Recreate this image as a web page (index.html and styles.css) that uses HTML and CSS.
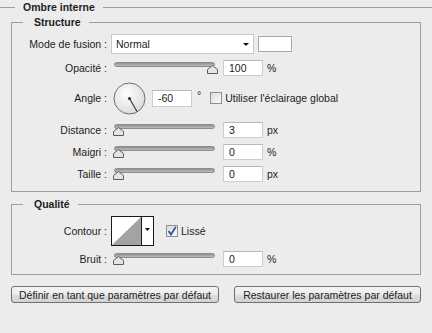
FILE: index.html
```html
<!DOCTYPE html>
<html>
<head>
    <title>Ombre interne</title>
    <link rel="stylesheet" href="styles.css">
</head>
<body>
    <fieldset class="effect">
        <legend>Ombre interne</legend>

        <!-- Structure -->
        <fieldset class="group structure">
            <legend>Structure</legend>

            <div class="row row-mode">
                <span class="label">Mode de fusion :</span>
                <div class="select">
                    <span>Normal</span>
                    <span class="arrow"></span>
                </div>
                <div class="swatch"></div>
            </div>

            <div class="row">
                <span class="label">Opacité :</span>
                <div class="slider">
                    <div class="track"></div>
                    <svg class="thumb" style="left: 96px" width="11" height="9" viewBox="0 0 11 9"><path d="M0.5 8.5V4.5L5.5 0.5L10.5 4.5V8.5Z"/></svg>
                </div>
                <input class="field" type="text" value="100">
                <span class="unit">%</span>
            </div>

            <div class="row row-angle">
                <span class="label">Angle :</span>
                <svg class="dial" width="33" height="33" viewBox="0 0 33 33">
                    <defs>
                        <radialGradient id="dialFill" cx="0.4" cy="0.35" r="0.7">
                            <stop offset="0" stop-color="#ffffff"/>
                            <stop offset="1" stop-color="#d9d9d9"/>
                        </radialGradient>
                    </defs>
                    <circle cx="16.5" cy="16.5" r="15.5" fill="url(#dialFill)" stroke="#6e6e6e"/>
                    <line x1="16.5" y1="16.5" x2="24" y2="29.5" stroke="#3a3a3a" stroke-width="1.2"/>
                    <circle cx="16.5" cy="16.5" r="1.6" fill="#333"/>
                </svg>
                <input class="field field-angle" type="text" value="-60">
                <span class="degree">°</span>
                <span class="checkbox"></span>
                <span class="check-label">Utiliser l'éclairage global</span>
            </div>

            <div class="row">
                <span class="label">Distance :</span>
                <div class="slider">
                    <div class="track"></div>
                    <svg class="thumb" style="left: 2px" width="11" height="9" viewBox="0 0 11 9"><path d="M0.5 8.5V4.5L5.5 0.5L10.5 4.5V8.5Z"/></svg>
                </div>
                <input class="field" type="text" value="3">
                <span class="unit">px</span>
            </div>

            <div class="row">
                <span class="label">Maigri :</span>
                <div class="slider">
                    <div class="track"></div>
                    <svg class="thumb" style="left: 2px" width="11" height="9" viewBox="0 0 11 9"><path d="M0.5 8.5V4.5L5.5 0.5L10.5 4.5V8.5Z"/></svg>
                </div>
                <input class="field" type="text" value="0">
                <span class="unit">%</span>
            </div>

            <div class="row">
                <span class="label">Taille :</span>
                <div class="slider">
                    <div class="track"></div>
                    <svg class="thumb" style="left: 2px" width="11" height="9" viewBox="0 0 11 9"><path d="M0.5 8.5V4.5L5.5 0.5L10.5 4.5V8.5Z"/></svg>
                </div>
                <input class="field" type="text" value="0">
                <span class="unit">px</span>
            </div>
        </fieldset>

        <!-- Qualite -->
        <fieldset class="group quality">
            <legend>Qualité</legend>

            <div class="row row-contour">
                <span class="label">Contour :</span>
                <svg class="contour" width="43" height="30" viewBox="0 0 43 30">
                    <rect x="0.5" y="0.5" width="42" height="29" fill="#fff" stroke="#1a1a1a"/>
                    <path d="M1 29L30 1V29Z" fill="#a3a3a3"/>
                    <line x1="30.5" y1="0.5" x2="30.5" y2="29.5" stroke="#1a1a1a"/>
                    <path d="M34 12H39L36.5 15Z" fill="#111"/>
                </svg>
                <span class="checkbox checked">
                    <svg width="10" height="10" viewBox="0 0 10 10"><path d="M1.5 5L4 8.5L8.8 0.8" fill="none" stroke="#3556a8" stroke-width="1.8"/></svg>
                </span>
                <span class="check-label">Lissé</span>
            </div>

            <div class="row">
                <span class="label">Bruit :</span>
                <div class="slider">
                    <div class="track"></div>
                    <svg class="thumb" style="left: 2px" width="11" height="9" viewBox="0 0 11 9"><path d="M0.5 8.5V4.5L5.5 0.5L10.5 4.5V8.5Z"/></svg>
                </div>
                <input class="field" type="text" value="0">
                <span class="unit">%</span>
            </div>
        </fieldset>

        <div class="buttons">
            <button class="btn btn-default">Définir en tant que paramètres par défaut</button>
            <button class="btn btn-reset">Restaurer les paramètres par défaut</button>
        </div>
    </fieldset>
</body>
</html>
```

FILE: styles.css
```css
body {
    margin: 0;
    background: #ececec;
    font-family: "Liberation Sans", Arial, sans-serif;
    font-size: 10.5px;
    color: #1c1c1c;
}

fieldset {
    margin: 0;
    min-width: 0;
}

legend {
    font-weight: bold;
    line-height: 14px;
}

.effect {
    border: none;
    border-top: 1px solid #9d9d9d;
    padding: 0 11px;
}

.effect > legend {
    margin-left: 4px;
    padding: 0 8px;
}

.group {
    border: 1px solid #9d9d9d;
    padding: 4px 0 9px 0;
}

.group > legend {
    margin-left: 11px;
    padding: 0 8px 0 11px;
}

.structure {
    margin-top: 1px;
}

.quality {
    margin-top: 5px;
    padding-top: 5px;
    padding-bottom: 7px;
}

.row {
    display: flex;
    align-items: center;
    height: 16px;
    margin-bottom: 6px;
}

.row:last-child {
    margin-bottom: 0;
}

.label {
    width: 95px;
    margin-right: 4px;
    text-align: right;
    white-space: nowrap;
}

/* blend mode */
.row-mode {
    height: 21px;
}

.select {
    display: flex;
    align-items: center;
    justify-content: space-between;
    box-sizing: border-box;
    width: 143px;
    height: 20px;
    padding: 0 4px 0 4px;
    background: #fff;
    border: 1px solid #c9c9c9;
}

.arrow {
    border-left: 3px solid transparent;
    border-right: 3px solid transparent;
    border-top: 3px solid #111;
    margin-top: 1px;
}

.swatch {
    box-sizing: border-box;
    width: 34px;
    height: 16px;
    margin-left: 4px;
    background: #fff;
    border: 1px solid #a9a9a9;
}

/* sliders */
.slider {
    position: relative;
    width: 109px;
    height: 16px;
}

.track {
    box-sizing: border-box;
    height: 5px;
    margin: 2px 5px 0 3px;
    border: 1px solid #8c8c8c;
    border-radius: 3px;
    background: linear-gradient(#8f8f8f, #bdbdbd);
}

.thumb {
    position: absolute;
    top: 5px;
    display: block;
}

.thumb path {
    fill: #e4e4e4;
    stroke: #5c5c5c;
}

.field {
    box-sizing: border-box;
    width: 40px;
    height: 16px;
    margin: 0 0 0 3px;
    padding: 0 5px;
    border: 1px solid #cdcdcd;
    border-top-color: #b8b8b8;
    background: #fff;
    font-family: inherit;
    font-size: 10.5px;
    color: #1c1c1c;
    outline: none;
}

.unit {
    margin-left: 4px;
}

/* angle */
.row-angle {
    height: 32px;
    margin-bottom: 8px;
}

.dial {
    display: block;
    margin-left: 2px;
}

.field-angle {
    margin-left: 6px;
    height: 17px;
}

.degree {
    margin-left: 5px;
    margin-top: -6px;
}

.checkbox {
    display: flex;
    align-items: center;
    justify-content: center;
    box-sizing: border-box;
    width: 12px;
    height: 12px;
    margin-left: 9px;
    border: 1px solid #8e8f8f;
    background: linear-gradient(135deg, #dcdcdc, #f8f8f8);
}

.check-label {
    margin-left: 3px;
}

/* contour */
.row-contour {
    height: 30px;
    margin-bottom: 5px;
}

.contour {
    display: block;
}

.row-contour .checkbox {
    margin-left: 12px;
}

/* buttons */
.buttons {
    display: flex;
    justify-content: space-between;
    margin-top: 11px;
}

.btn {
    box-sizing: border-box;
    height: 17px;
    padding: 0;
    border: 1px solid #707070;
    border-radius: 3px;
    background: linear-gradient(#f4f4f4 0%, #ebebeb 50%, #dedede 51%, #d2d2d2 100%);
    font-family: inherit;
    font-size: 10.5px;
    color: #1c1c1c;
}

.btn-default {
    width: 208px;
}

.btn-reset {
    width: 187px;
}
```
